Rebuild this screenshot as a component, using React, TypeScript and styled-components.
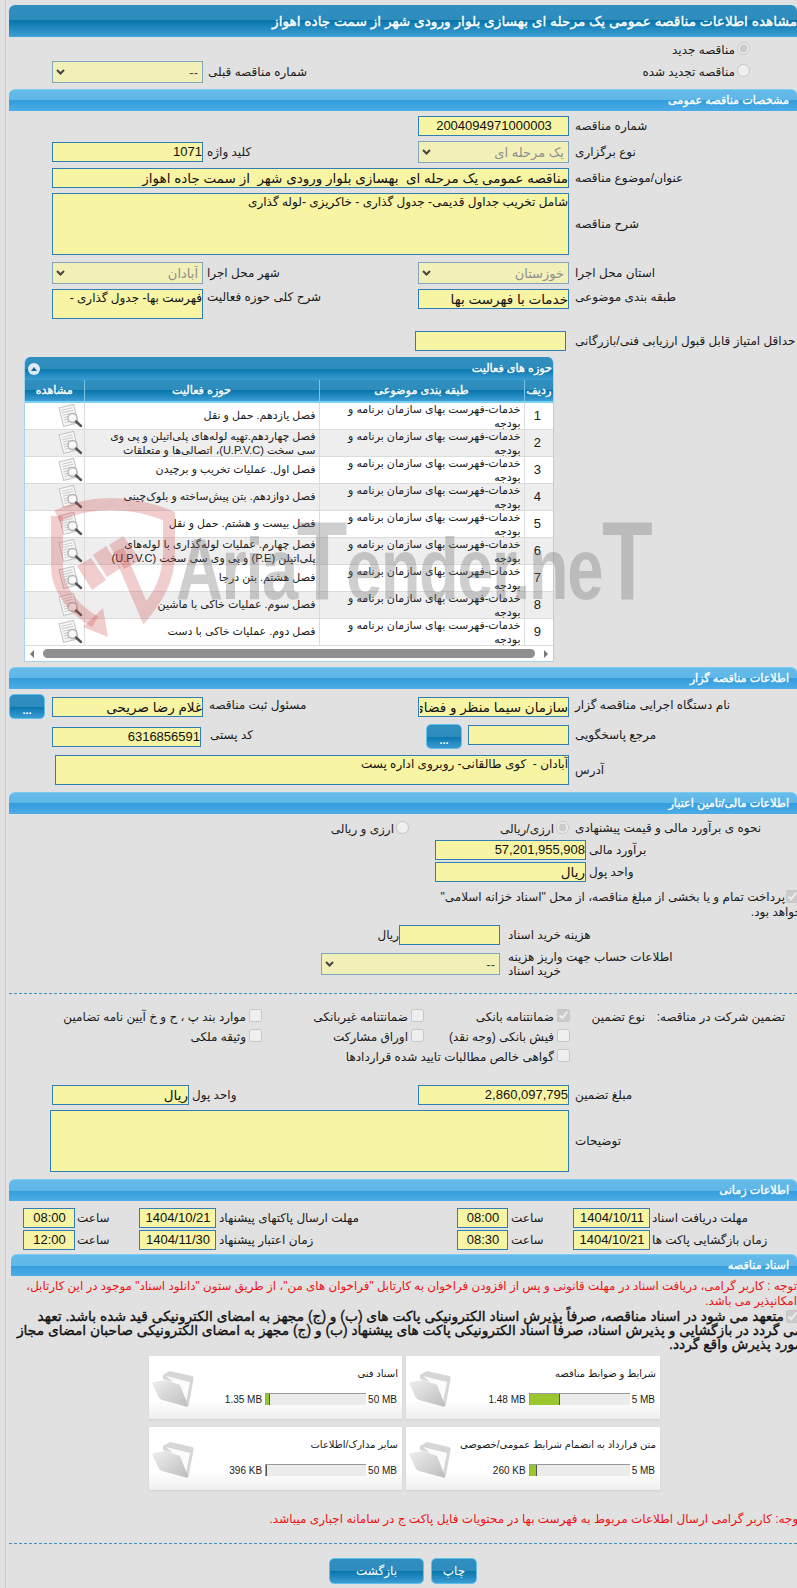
import React from "react";
import styled, { createGlobalStyle, css } from "styled-components";

const FONT = `"Liberation Sans", "DejaVu Sans", sans-serif`;
const BLUE_BAR = "linear-gradient(#2f8fc0 0, #2e8cbb 50%, #0775ab 50%, #3b9dd3 100%)";
const LIGHT_BAR = "linear-gradient(#65bbea 0, #5fb7e7 50%, #339ddd 50%, #4dade6 100%)";
const CHEVRON =
  "url(\"data:image/svg+xml,%3Csvg xmlns='http://www.w3.org/2000/svg' width='9' height='7'%3E%3Cpath d='M1 1l3.500 3.500L8 1' fill='none' stroke='%23444' stroke-width='2'/%3E%3C/svg%3E\")";

// DejaVu's real bold is far wider than the original face, so thicken the regular one
const heavy = css`
  font-weight: normal;
  -webkit-text-stroke: 0.35px currentColor;
`;

const GlobalStyle = createGlobalStyle`
  html, body {
    margin: 0;
    padding: 0;
    height: 1588px;
    overflow: hidden;
    background: #e1e1e1;
  }
  * { box-sizing: border-box; }
`;

const Frame = styled.div`
  position: relative;
  width: 797px;
  height: 1588px;
  margin-left: 5px;
  padding: 5px 0 0 3px;
  border-left: 1px solid #cdcdcd;
  font-family: ${FONT};
  font-size: 12px;
  color: #1a1a1a;
  direction: rtl;
  overflow: hidden;
`;

const Content = styled.div`
  width: 793px;
`;

const TitleBar = styled.div`
  height: 32px;
  margin-right: 5px;
  border-radius: 6px 6px 0 0;
  border-bottom: 1px solid #3fa2dc;
  background: ${BLUE_BAR};
  color: #fff;
  font-size: 13.7px;
  ${heavy}
  line-height: 34px;
  white-space: nowrap;
  text-align: right;
`;

const SectionBar = styled.div<{ $top: number; $inset?: number }>`
  height: 22px;
  margin-top: ${(p) => p.$top}px;
  margin-left: ${(p) => p.$inset ?? 0}px;
  margin-right: 5px;
  padding-right: 8px;
  border-radius: 6px 6px 0 0;
  border-top: 1px solid #7dcdf1;
  background: ${LIGHT_BAR};
  color: #fff;
  font-size: 11.2px;
  ${heavy}
  line-height: 21px;
`;

const FieldRow = styled.div<{ $top: number; $cols?: string; $h?: number; $start?: boolean }>`
  display: grid;
  grid-template-columns: ${(p) => p.$cols ?? "233px 151px 215px 151px 43px"};
  align-items: ${(p) => (p.$start ? "start" : "center")};
  margin-top: ${(p) => p.$top}px;
  height: ${(p) => (p.$h ? `${p.$h}px` : "auto")};
`;

const Label = styled.label<{ $pad?: number; $span?: string; $wrapAt?: number; $top?: number }>`
  display: block;
  padding-left: ${(p) => p.$pad ?? 6}px;
  padding-top: ${(p) => p.$top ?? 0}px;
  text-align: left;
  white-space: ${(p) => (p.$wrapAt ? "normal" : "nowrap")};
  line-height: ${(p) => (p.$wrapAt ? "14px" : "15px")};
  ${(p) => (p.$wrapAt ? `padding-right: ${p.$wrapAt}px;` : "")}
  ${(p) => (p.$span ? `grid-column: ${p.$span};` : "")}
`;

const Field = styled.input<{
  $w?: number;
  $h?: number;
  $span?: string;
  $mt?: number;
  $mr?: number;
  $center?: boolean;
  $num?: boolean;
  $left?: boolean;
}>`
  display: block;
  width: ${(p) => (p.$w ? `${p.$w}px` : "100%")};
  height: ${(p) => p.$h ?? 20}px;
  margin: ${(p) => p.$mt ?? 0}px ${(p) => p.$mr ?? 0}px 0 0;
  padding: 0 0 1px 1px;
  border: 1px solid #2f7fb4;
  border-radius: 0;
  background: #f7f4a3;
  color: #111;
  font-family: ${FONT};
  font-size: ${(p) => (p.$num ? 13 : 13.5)}px;
  direction: rtl;
  text-align: ${(p) => (p.$center ? "center" : "right")};
  outline: none;
  ${(p) => (p.$span ? `grid-column: ${p.$span};` : "")}
  ${(p) => (p.$left ? "justify-self: end;" : "")}
`;

const FieldArea = styled.textarea<{ $w?: number; $h: number; $span?: string }>`
  display: block;
  width: ${(p) => (p.$w ? `${p.$w}px` : "100%")};
  height: ${(p) => p.$h}px;
  margin: 0;
  padding: 1px 0 0;
  border: 1px solid #2f7fb4;
  border-radius: 0;
  background: #f7f4a3;
  color: #111;
  font-family: ${FONT};
  font-size: 12px;
  line-height: 15px;
  direction: rtl;
  resize: none;
  overflow: hidden;
  outline: none;
  ${(p) => (p.$span ? `grid-column: ${p.$span};` : "")}
`;

const Picker = styled.select<{ $w?: number; $dark?: boolean }>`
  display: block;
  width: ${(p) => (p.$w ? `${p.$w}px` : "100%")};
  height: 22px;
  margin: 0;
  padding: 0 4px 0 14px;
  appearance: none;
  opacity: 1;
  border: 1px solid #7fa6bb;
  border-radius: 0;
  background: #f2f0b7 ${CHEVRON} no-repeat 3px 7px;
  color: ${(p) => (p.$dark ? "#444" : "#8f8f8f")};
  font-family: ${FONT};
  font-size: 13px;
  direction: rtl;
`;

const RadioCell = styled.label<{ $pad?: number }>`
  display: flex;
  align-items: flex-start;
  gap: 2px;
  padding-right: ${(p) => p.$pad ?? 0}px;
  white-space: nowrap;
  line-height: 16px;
  input {
    margin: 0;
    flex: none;
  }
`;

const GuaranteeGrid = styled.div`
  display: grid;
  grid-template-columns: 157px 75px 146px 162px 1fr;
  grid-auto-rows: 20px;
  margin-top: 15px;
`;

const Plain = styled.div<{ $pad?: number }>`
  padding-right: ${(p) => p.$pad ?? 0}px;
  padding-top: 1px;
  white-space: nowrap;
  line-height: 15px;
`;

const CheckCell = styled.label<{ $span?: string }>`
  display: flex;
  align-items: flex-start;
  gap: 3px;
  white-space: nowrap;
  line-height: 17px;
  ${(p) => (p.$span ? `grid-column: ${p.$span};` : "")}
  input {
    margin: 0;
    flex: none;
  }
`;

const TreasuryNote = styled.label`
  display: block;
  margin-top: 8px;
  line-height: 15px;
  height: 30px;
  white-space: nowrap;
  input {
    margin: 0 3px 0 1px;
    vertical-align: top;
  }
`;

const Dashed = styled.div<{ $top: number }>`
  margin-top: ${(p) => p.$top}px;
  margin-right: 5px;
  border-top: 1px dashed #3f93c4;
`;

const DotsButton = styled.button<{ $left?: boolean }>`
  width: 36px;
  height: 25px;
  padding: 6px 0 0;
  border: 1px solid #5fc1ea;
  border-radius: 5px;
  background: ${BLUE_BAR};
  color: #fff;
  font-family: ${FONT};
  font-size: 11px;
  font-weight: bold;
  ${(p) => (p.$left ? "justify-self: end;" : "")}
`;

const AskCell = styled.div`
  display: flex;
  align-items: flex-start;
  gap: 6px;
`;

const Panel = styled.div`
  width: 530px;
  height: 305px;
  margin: 6px 248px 0 0;
  border: solid #a7d3ee;
  border-width: 0 1px 1px;
  border-radius: 6px 6px 0 0;
  background: #fff;
  overflow: hidden;
`;

const PanelHead = styled.div`
  display: flex;
  align-items: center;
  justify-content: space-between;
  height: 23px;
  padding: 0 2px 0 4px;
  margin: 0 -1px;
  background: ${BLUE_BAR};
  color: #fff;
  font-size: 11.2px;
  ${heavy}
`;

const Collapse = styled.span`
  display: flex;
  align-items: center;
  justify-content: center;
  width: 12px;
  height: 12px;
  border-radius: 50%;
  background: #dfe9f3;
  &::before {
    content: "";
    border: solid transparent;
    border-width: 0 3px 4px;
    border-bottom-color: #15679a;
  }
`;

const Table = styled.table`
  width: 528px;
  border-collapse: collapse;
  table-layout: fixed;
  font-size: 11px;
`;

const HeadCell = styled.th<{ $w: number }>`
  width: ${(p) => p.$w}px;
  height: 22px;
  padding: 0;
  border-left: 1px solid #7cc4e6;
  border-bottom: 2px solid #79d0f0;
  background: ${BLUE_BAR};
  color: #fff;
  font-size: 11.2px;
  ${heavy}
  &:last-child { border-left: 0; }
`;

const BodyRow = styled.tr<{ $alt: boolean }>`
  height: 27px;
  background: ${(p) => (p.$alt ? "#eeeeee" : "#ffffff")};
`;

const BodyCell = styled.td<{ $center?: boolean; $wide?: boolean }>`
  height: 27px;
  padding: 0 3px 0 ${(p) => (p.$wide ? 12 : 0)}px;
  border-left: 1px solid #dcdcdc;
  border-bottom: 1px solid #dcdcdc;
  text-align: ${(p) => (p.$center ? "center" : "right")};
  font-size: ${(p) => (p.$center ? 13 : 11)}px;
  &:last-child { border-left: 0; }
`;

const CellText = styled.div`
  max-height: 26px;
  margin-top: -1px;
  line-height: 14px;
`;

const ViewIcon = styled.svg`
  display: block;
  margin: 0 -2px 0 auto;
`;

const ScrollTrack = styled.div`
  display: flex;
  align-items: center;
  gap: 3px;
  height: 16px;
  padding: 0 5px;
  direction: ltr;
`;

const ScrollArrow = styled.span<{ $left?: boolean }>`
  flex: none;
  border: solid transparent;
  border-width: 4px 0 4px 4px;
  border-left-color: #777;
  ${(p) => (p.$left ? "transform: scaleX(-1);" : "")}
`;

const ScrollThumb = styled.span`
  display: block;
  margin: 0 6px;
  flex: 1;
  height: 9px;
  border-radius: 5px;
  background: #8f8f8f;
`;

const Notice = styled.p<{ $top: number; $inset?: number; $size?: number }>`
  margin: ${(p) => p.$top}px ${(p) => p.$inset ?? 0}px 0 0;
  color: #ee1111;
  font-size: ${(p) => p.$size ?? 12}px;
  line-height: 15px;
  white-space: nowrap;
`;

const Pledge = styled.label`
  display: block;
  margin-top: 1px;
  font-size: 13.8px;
  ${heavy}
  color: #111;
  line-height: 14px;
  white-space: nowrap;
  input {
    margin: 0 3px 0 2px;
    vertical-align: top;
  }
`;

const Cards = styled.div`
  display: grid;
  grid-template-columns: 254px 253px;
  grid-auto-rows: 63px;
  gap: 8px 4px;
  margin: 4px 142px 0 0;
`;

const Card = styled.div`
  position: relative;
  display: flex;
  justify-content: space-between;
  padding: 0 4px 0 3px;
  background: linear-gradient(#ffffff 0, #ffffff 70%, #eeeeee 100%);
  box-shadow: 0 1px 2px #cfcfcf;
  font-size: 10px;
`;

const CardBody = styled.div`
  flex: 1;
`;

const CardTitle = styled.div`
  margin-top: 11px;
  height: 14px;
  line-height: 14px;
  white-space: nowrap;
`;

const Meter = styled.div`
  display: flex;
  align-items: center;
  margin-top: 12px;
  padding-right: 1px;
  height: 12px;
`;

const MeterCap = styled.span`
  flex: none;
  margin-left: 2px;
  white-space: nowrap;
  direction: ltr;
`;

const MeterUsed = styled.span`
  flex: none;
  margin-right: 3px;
  white-space: nowrap;
  direction: ltr;
`;

const MeterTrack = styled.div`
  display: flex;
  direction: ltr;
  width: 101px;
  height: 12px;
  flex: none;
  border-top: 1px solid #9a9a9a;
  border-left: 1px solid #9a9a9a;
  background: #ebebeb;
`;

const MeterFill = styled.div`
  height: 100%;
  background: #9ac72f;
  border-right: 1px solid #555;
`;

const FolderIcon = styled.svg`
  flex: none;
  margin-top: 14px;
`;

const Actions = styled.div`
  display: flex;
  gap: 7px;
  margin-top: 14px;
  padding-right: 325px;
`;

const ActionButton = styled.button<{ $w: number }>`
  width: ${(p) => p.$w}px;
  height: 26px;
  padding: 0;
  border: 1px solid #5fc1ea;
  border-radius: 5px;
  background: ${BLUE_BAR};
  color: #fff;
  font-family: ${FONT};
  font-size: 12px;
`;

const Watermark = styled.div`
  position: absolute;
  left: 39px;
  top: 495px;
  width: 620px;
  height: 150px;
  direction: ltr;
  pointer-events: none;
`;

const WatermarkText = styled.span`
  position: absolute;
  left: 131px;
  top: 11px;
  font-family: "Liberation Sans", sans-serif;
  font-size: 88px;
  font-weight: bold;
  line-height: 110px;
  letter-spacing: -2px;
  white-space: nowrap;
  color: rgba(110, 110, 110, 0.33);
  transform: scaleX(0.74);
  transform-origin: left top;
`;

const WatermarkCap = styled.span`
  font-size: 112px;
`;

const activities = [
  "فصل یازدهم. حمل و نقل",
  "فصل چهاردهم.تهیه لوله‌های پلی‌اتیلن و پی وی سی سخت (U.P.V.C)، اتصالی‌ها و متعلقات",
  "فصل اول. عملیات تخریب و برچیدن",
  "فصل دوازدهم. بتن پیش‌ساخته و بلوک‌چینی",
  "فصل بیست و هشتم. حمل و نقل",
  "فصل چهارم. عملیات لوله‌گذاری با لوله‌های پلی‌اتیلن (P.E) و پی وی سی سخت (U.P.V.C)",
  "فصل هشتم. بتن درجا",
  "فصل سوم. عملیات خاکی با ماشین",
  "فصل دوم. عملیات خاکی با دست",
];

const docs = [
  { title: "شرایط و ضوابط مناقصه", used: "1.48 MB", cap: "5 MB", pct: 30 },
  { title: "اسناد فنی", used: "1.35 MB", cap: "50 MB", pct: 3.5 },
  { title: "متن قرارداد به انضمام شرایط عمومی/خصوصی", used: "260 KB", cap: "5 MB", pct: 7 },
  { title: "سایر مدارک/اطلاعات", used: "396 KB", cap: "50 MB", pct: 1 },
];

const DocGlass = () => (
  <ViewIcon width="25" height="24" viewBox="0 0 25 24">
    <g transform="rotate(-14 10 11)">
      <rect x="3" y="2" width="15" height="19" fill="#f6f6f6" stroke="#c4c4c4" />
      <path d="M5 5h11M5 7.500h11M5 10h7M5 12.500h5M5 15h6M5 17.500h10" stroke="#cacaca" strokeWidth="1" />
    </g>
    <circle cx="14.500" cy="14" r="4.500" fill="#fafafa" fillOpacity="0.8" stroke="#b0b0b0" strokeWidth="1.300" />
    <path d="M18 17.500l5 4.500" stroke="#555" strokeWidth="2.400" strokeLinecap="round" />
  </ViewIcon>
);

const Folder = () => (
  <FolderIcon width="42" height="37" viewBox="0 0 42 37">
    <defs>
      <linearGradient id="folderFront" x1="0" y1="0" x2="1" y2="1">
        <stop offset="0" stopColor="#efefef" />
        <stop offset="1" stopColor="#bdbdbd" />
      </linearGradient>
    </defs>
    <path d="M11 5l7-4 22 5c1 0 2 1 1.500 3L37 34c-.5 2-2 3-3 2L30 14 11 9z" fill="#d6d6d6" />
    <path d="M14 6l24 6-4 20-8-16z" fill="#fbfbfb" />
    <path d="M1 12l13-2 14 5 8 20c.5 1.500-1 2-2 1.500L10 30C8 29 7 28 6 26L.5 14c-.2-1 0-2 .5-2z" fill="url(#folderFront)" />
  </FolderIcon>
);

const WatermarkLogo = () => (
  <svg width="150" height="150" viewBox="0 0 150 150" style={{ position: "absolute", left: 0, top: 0 }}>
    <g fill="none" stroke="rgba(205,60,60,0.26)" strokeWidth="12">
      <path d="M12 21C45 5 85 5 124 21V58C124 85 112 103 100 118L73 55" />
      <path d="M12 21V72C12 95 30 115 50 127" />
    </g>
    <g fill="rgba(205,60,60,0.26)">
      <path d="M63 142L38 132 58 113z" />
      <path d="M32 71l14-8 15 22-14 10z" />
      <path d="M48 60l13-9 15 22-14 9z" />
      <path d="M64 50l14-9 18 24-17 9z" />
    </g>
  </svg>
);

const App: React.FC = () => {
  return (
    <>
      <GlobalStyle />
      <Frame>
        <Content>
          <TitleBar>مشاهده اطلاعات مناقصه عمومی یک مرحله ای بهسازی بلوار ورودی شهر از سمت جاده اهواز</TitleBar>

          <FieldRow $top={5} $h={16}>
            <RadioCell $pad={52}>
              <input type="radio" name="kind" checked disabled readOnly />
              مناقصه جدید
            </RadioCell>
          </FieldRow>
          <FieldRow $top={3} $h={22}>
            <RadioCell $pad={52}>
              <input type="radio" name="kind" disabled />
              مناقصه تجدید شده
            </RadioCell>
            <span />
            <Label $pad={5}>شماره مناقصه قبلی</Label>
            <Picker disabled $dark>
              <option>--</option>
            </Picker>
          </FieldRow>

          <SectionBar $top={6}>مشخصات مناقصه عمومی</SectionBar>

          <FieldRow $top={5} $h={20}>
            <Label>شماره مناقصه</Label>
            <Field $center $num readOnly value="2004094971000003" />
          </FieldRow>
          <FieldRow $top={5} $h={22}>
            <Label>نوع برگزاری</Label>
            <Picker disabled>
              <option>یک مرحله ای</option>
            </Picker>
            <Label $pad={4}>کلید واژه</Label>
            <Field $num readOnly value="1071" />
          </FieldRow>
          <FieldRow $top={5} $h={20}>
            <Label>عنوان/موضوع مناقصه</Label>
            <Field $span="2 / 5" readOnly value="مناقصه عمومی یک مرحله ای  بهسازی بلوار ورودی شهر  از سمت جاده اهواز" />
          </FieldRow>
          <FieldRow $top={5} $h={62}>
            <Label>شرح مناقصه</Label>
            <FieldArea $span="2 / 5" $h={62} readOnly value="شامل تخریب جداول قدیمی- جدول گذاری - خاکریزی -لوله گذاری" />
          </FieldRow>
          <FieldRow $top={7} $h={22}>
            <Label>استان محل اجرا</Label>
            <Picker disabled>
              <option>خوزستان</option>
            </Picker>
            <Label $pad={4}>شهر محل اجرا</Label>
            <Picker disabled>
              <option>آبادان</option>
            </Picker>
          </FieldRow>
          <FieldRow $top={5} $h={30} $start>
            <Label $top={1}>طبقه بندی موضوعی</Label>
            <Field readOnly value="خدمات با فهرست بها" />
            <Label $pad={4} $top={1}>شرح کلی حوزه فعالیت</Label>
            <FieldArea $h={30} readOnly value="فهرست بها- جدول گذاری -" />
          </FieldRow>
          <FieldRow $top={12} $h={20}>
            <Label>حداقل امتیاز قابل قبول ارزیابی فنی/بازرگانی</Label>
            <Field $mr={3} readOnly value="" />
          </FieldRow>

          <Panel>
            <PanelHead>
              حوزه های فعالیت
              <Collapse />
            </PanelHead>
            <Table>
              <thead>
                <tr>
                  <HeadCell $w={29}>ردیف</HeadCell>
                  <HeadCell $w={205}>طبقه بندی موضوعی</HeadCell>
                  <HeadCell $w={235}>حوزه فعالیت</HeadCell>
                  <HeadCell $w={59}>مشاهده</HeadCell>
                </tr>
              </thead>
              <tbody>
                {activities.map((activity, i) => (
                  <BodyRow key={activity} $alt={i % 2 === 1}>
                    <BodyCell $center>{i + 1}</BodyCell>
                    <BodyCell>
                      <CellText>خدمات-فهرست بهای سازمان برنامه و بودجه</CellText>
                    </BodyCell>
                    <BodyCell $wide>
                      <CellText>{activity}</CellText>
                    </BodyCell>
                    <BodyCell>
                      <DocGlass />
                    </BodyCell>
                  </BodyRow>
                ))}
              </tbody>
            </Table>
            <ScrollTrack>
              <ScrollArrow $left />
              <ScrollThumb />
              <ScrollArrow />
            </ScrollTrack>
          </Panel>

          <SectionBar $top={5}>اطلاعات مناقصه گزار</SectionBar>

          <FieldRow $top={5} $h={26} $start>
            <Label $top={4}>نام دستگاه اجرایی مناقصه گزار</Label>
            <Field $mt={3} readOnly value="سازمان سیما منظر و فضای سبز شهرداری آبادان" />
            <Label $top={4} $pad={6}>مسئول ثبت مناقصه</Label>
            <Field $mt={3} readOnly value="غلام رضا صریحی" />
            <DotsButton $left>...</DotsButton>
          </FieldRow>
          <FieldRow $top={4} $h={25} $start>
            <Label $top={4}>مرجع پاسخگویی</Label>
            <AskCell>
              <Field $w={101} $mt={1} readOnly value="" />
              <DotsButton>...</DotsButton>
            </AskCell>
            <Label $top={4} $pad={7}>کد پستی</Label>
            <Field $w={149} $mt={3} $num $left readOnly value="6316856591" />
          </FieldRow>
          <FieldRow $top={6} $h={30}>
            <Label>آدرس</Label>
            <FieldArea $span="2 / 5" $w={514} $h={30} readOnly value="آبادان -  کوی طالقانی- روبروی اداره پست" />
          </FieldRow>

          <SectionBar $top={7}>اطلاعات مالی/تامین اعتبار</SectionBar>

          <FieldRow $top={7} $h={15} $start>
            <Label>نحوه ی برآورد مالی و قیمت پیشنهادی</Label>
            <RadioCell>
              <input type="radio" name="currency" checked disabled readOnly />
              ارزی/ریالی
            </RadioCell>
            <RadioCell $pad={9}>
              <input type="radio" name="currency" disabled />
              ارزی و ریالی
            </RadioCell>
          </FieldRow>
          <FieldRow $top={4} $h={20} $cols="216px 151px">
            <Label $pad={3}>برآورد مالی</Label>
            <Field $num readOnly value="57,201,955,908" />
          </FieldRow>
          <FieldRow $top={2} $h={20} $cols="216px 151px">
            <Label $pad={3}>واحد پول</Label>
            <Field readOnly value="ریال" />
          </FieldRow>
          <TreasuryNote>
            <input type="checkbox" checked disabled readOnly />
            پرداخت تمام و یا بخشی از مبلغ مناقصه، از محل "اسناد خزانه اسلامی"
            <br />
            خواهد بود.
          </TreasuryNote>
          <FieldRow $top={5} $h={20} $cols="302px 101px 40px">
            <Label $pad={8}>هزینه خرید اسناد</Label>
            <Field readOnly value="" />
            <span>ریال</span>
          </FieldRow>
          <FieldRow $top={5} $h={22} $cols="302px 179px">
            <Label $pad={8} $wrapAt={124}>اطلاعات حساب جهت واریز هزینه خرید اسناد</Label>
            <Picker disabled $dark>
              <option>--</option>
            </Picker>
          </FieldRow>

          <Dashed $top={21} />

          <GuaranteeGrid>
            <Plain $pad={17}>تضمین شرکت در مناقصه:</Plain>
            <Plain>نوع تضمین</Plain>
            <CheckCell>
              <input type="checkbox" checked disabled readOnly />
              ضمانتنامه بانکی
            </CheckCell>
            <CheckCell>
              <input type="checkbox" disabled />
              ضمانتنامه غیربانکی
            </CheckCell>
            <CheckCell>
              <input type="checkbox" disabled />
              موارد بند پ ، ح و خ آیین نامه تضامین
            </CheckCell>
            <CheckCell $span="3">
              <input type="checkbox" disabled />
              فیش بانکی (وجه نقد)
            </CheckCell>
            <CheckCell>
              <input type="checkbox" disabled />
              اوراق مشارکت
            </CheckCell>
            <CheckCell>
              <input type="checkbox" disabled />
              وثیقه ملکی
            </CheckCell>
            <CheckCell $span="3 / 6">
              <input type="checkbox" disabled />
              گواهی خالص مطالبات تایید شده قراردادها
            </CheckCell>
          </GuaranteeGrid>

          <FieldRow $top={16} $h={20} $cols="233px 151px 229px 137px">
            <Label>مبلغ تضمین</Label>
            <Field $num readOnly value="2,860,097,795" />
            <Label $pad={3}>واحد پول</Label>
            <Field readOnly value="ریال" />
          </FieldRow>
          <FieldRow $top={5} $h={62}>
            <Label>توضیحات</Label>
            <FieldArea $span="2 / 5" $w={519} $h={62} readOnly value="" />
          </FieldRow>

          <SectionBar $top={7}>اطلاعات زمانی</SectionBar>

          <FieldRow $top={7} $h={20} $cols="152px 77px 65px 51px 241px 77px 64px 52px">
            <Label $pad={2}>مهلت دریافت اسناد</Label>
            <Field $center $num readOnly value="1404/10/11" />
            <Label $pad={3}>ساعت</Label>
            <Field $center $num readOnly value="08:00" />
            <Label $pad={3}>مهلت ارسال پاکتهای پیشنهاد</Label>
            <Field $center $num readOnly value="1404/10/21" />
            <Label $pad={2}>ساعت</Label>
            <Field $center $num readOnly value="08:00" />
          </FieldRow>
          <FieldRow $top={2} $h={20} $cols="152px 77px 65px 51px 241px 77px 64px 52px">
            <Label $pad={2}>زمان بازگشایی پاکت ها</Label>
            <Field $center $num readOnly value="1404/10/21" />
            <Label $pad={3}>ساعت</Label>
            <Field $center $num readOnly value="08:30" />
            <Label $pad={3}>زمان اعتبار پیشنهاد</Label>
            <Field $center $num readOnly value="1404/11/30" />
            <Label $pad={2}>ساعت</Label>
            <Field $center $num readOnly value="12:00" />
          </FieldRow>

          <SectionBar $top={4} $inset={2}>اسناد مناقصه</SectionBar>

          <Notice $top={3} $inset={5} $size={11.85}>
            توجه : کاربر گرامی، دریافت اسناد در مهلت قانونی و پس از افزودن فراخوان به کارتابل "فراخوان های من"، از طریق ستون "دانلود اسناد" موجود در این کارتابل،
            <br />
            امکانپذیر می باشد.
          </Notice>
          <Pledge>
            <input type="checkbox" checked disabled readOnly />
            متعهد می شود در اسناد مناقصه، صرفاً پذیرش اسناد الکترونیکی پاکت های (ب) و (ج) مجهز به امضای الکترونیکی قید شده باشد. تعهد
            <br />
            می گردد در بازگشایی و پذیرش اسناد، صرفاً اسناد الکترونیکی پاکت های پیشنهاد (ب) و (ج) مجهز به امضای الکترونیکی صاحبان امضای مجاز
            <br />
            مورد پذیرش واقع گردد.
          </Pledge>

          <Cards>
            {docs.map((doc) => (
              <Card key={doc.title}>
                <CardBody>
                  <CardTitle>{doc.title}</CardTitle>
                  <Meter>
                    <MeterCap>{doc.cap}</MeterCap>
                    <MeterTrack>
                      <MeterFill style={{ width: `${doc.pct}%` }} />
                    </MeterTrack>
                    <MeterUsed>{doc.used}</MeterUsed>
                  </Meter>
                </CardBody>
                <Folder />
              </Card>
            ))}
          </Cards>

          <Notice $top={22}>
            توجه: کاربر گرامی ارسال اطلاعات مربوط به فهرست بها در محتویات فایل پاکت ج در سامانه اجباری میباشد.
          </Notice>

          <Dashed $top={16} />

          <Actions>
            <ActionButton $w={46}>چاپ</ActionButton>
            <ActionButton $w={95}>بازگشت</ActionButton>
          </Actions>
        </Content>

        <Watermark>
          <WatermarkLogo />
          <WatermarkText>
            Aria<WatermarkCap>T</WatermarkCap>ender.ne<WatermarkCap>T</WatermarkCap>
          </WatermarkText>
        </Watermark>
      </Frame>
    </>
  );
};

export default App;
